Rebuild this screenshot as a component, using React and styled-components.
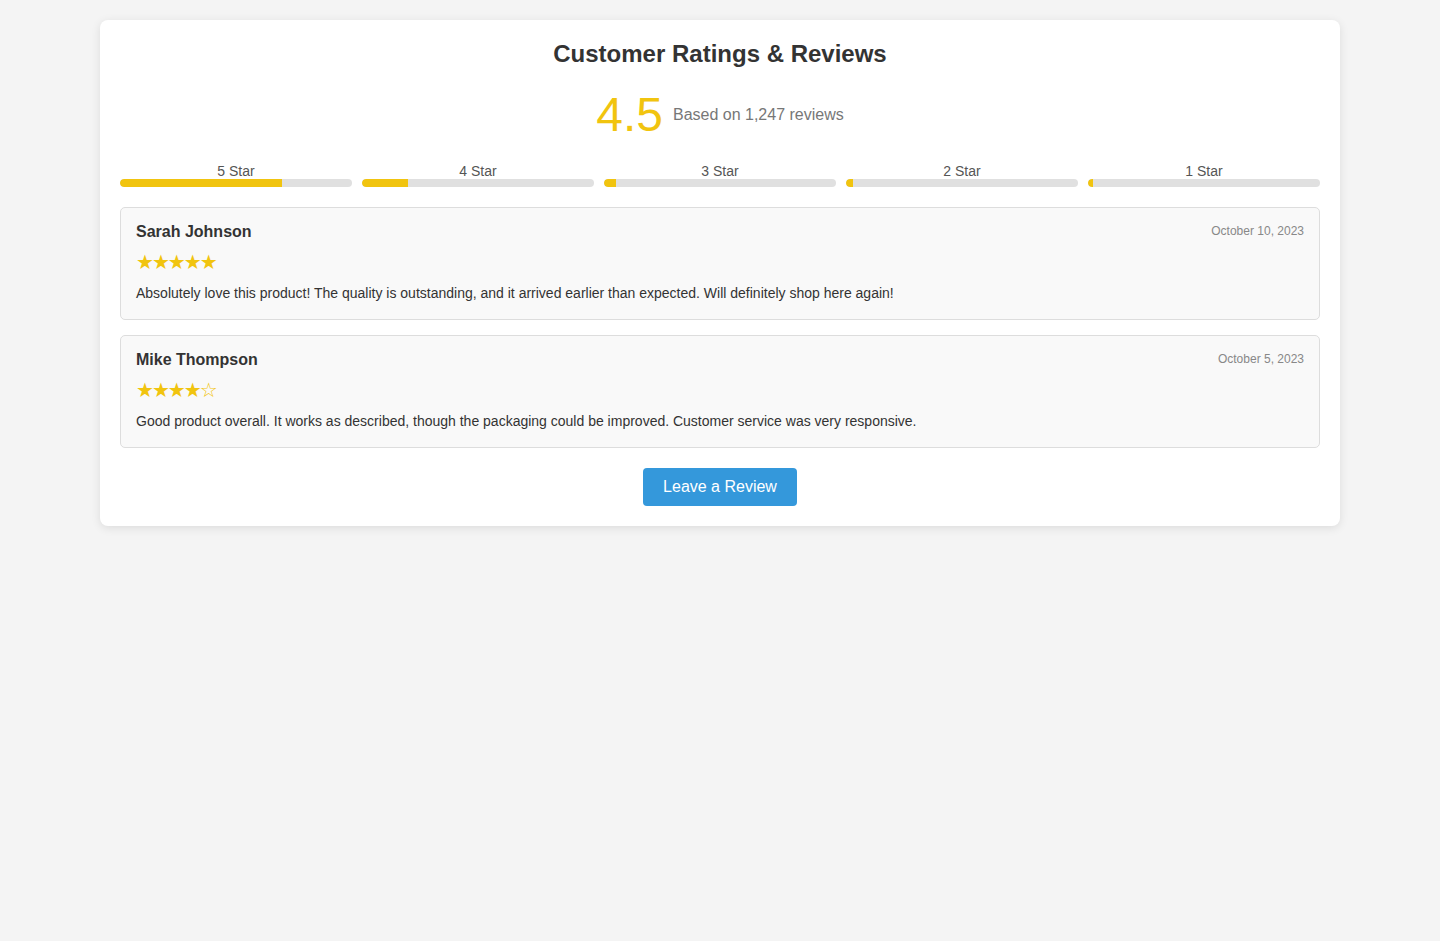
import React from 'react';
import styled, { createGlobalStyle } from 'styled-components';

const GlobalStyle = createGlobalStyle`
  body {
    margin: 0;
    padding: 20px;
    background-color: #f4f4f4;
    font-family: "Liberation Sans", Arial, sans-serif;
    color: #333;
  }
`

const Container = styled.div`
  max-width: 1200px;
  margin: 0 auto;
  background-color: #fff;
  padding: 20px;
  border-radius: 8px;
  box-shadow: 0 2px 10px rgba(0,0,0,0.1);
`

const Title = styled.h1`
  margin: 0 0 20px;
  text-align: center;
  font-size: 24px;
  line-height: 28px;
  color: #333;
`

const Summary = styled.div`
  display: flex;
  align-items: center;
  justify-content: center;
  gap: 10px;
  margin-bottom: 21px;
`

const Score = styled.span`
  font-size: 48px;
  line-height: 54px;
  color: #f1c40f;
`

const Based = styled.span`
  font-size: 16px;
  color: #777;
`

const Bars = styled.div`
  display: flex;
  gap: 10px;
  margin-bottom: 20px;
`

const BarItem = styled.div`
  flex: 1;
  text-align: center;
`

const BarLabel = styled.div`
  font-size: 14px;
  line-height: 16px;
  color: #555;
`

const Track = styled.div`
  height: 8px;
  background-color: #e0e0e0;
  border-radius: 4px;
  overflow: hidden;
`

const Fill = styled.div`
  height: 100%;
  background-color: #f1c40f;
  border-radius: 4px 0 0 4px;
`

const Card = styled.div`
  background-color: #f9f9f9;
  border: 1px solid #ddd;
  border-radius: 5px;
  padding: 15px;
  margin-bottom: 15px;
`

const CardHead = styled.div`
  display: flex;
  justify-content: space-between;
  align-items: flex-start;
  margin-bottom: 10px;
`

const Name = styled.span`
  font-weight: bold;
  font-size: 16px;
  line-height: 18px;
`

const DateText = styled.span`
  font-size: 12px;
  line-height: 16px;
  color: #888;
`

const Stars = styled.div`
  color: #f1c40f;
  font-size: 20px;
  line-height: 23px;
  letter-spacing: -2px;
  font-family: "DejaVu Sans", sans-serif;
  margin-bottom: 9px;
`

const Text = styled.p`
  margin: 0;
  font-size: 14px;
  line-height: 21px;
  color: #333;
`

const ButtonRow = styled.div`
  text-align: center;
  margin-top: 20px;
`

const Button = styled.button`
  background-color: #3498db;
  color: #fff;
  border: none;
  border-radius: 4px;
  padding: 10px 20px;
  font-size: 16px;
  line-height: 18px;
  font-family: "Liberation Sans", Arial, sans-serif;
  cursor: pointer;
`

const bars = [
  { label: '5 Star', pct: 70 },
  { label: '4 Star', pct: 20 },
  { label: '3 Star', pct: 5 },
  { label: '2 Star', pct: 3 },
  { label: '1 Star', pct: 2 },
]

const reviews = [
  {
    name: 'Sarah Johnson',
    date: 'October 10, 2023',
    stars: 5,
    text: 'Absolutely love this product! The quality is outstanding, and it arrived earlier than expected. Will definitely shop here again!',
  },
  {
    name: 'Mike Thompson',
    date: 'October 5, 2023',
    stars: 4,
    text: 'Good product overall. It works as described, though the packaging could be improved. Customer service was very responsive.',
  },
]

const App = () => {
  return (
    <>
      <GlobalStyle />
      <Container>
        <Title>Customer Ratings &amp; Reviews</Title>
        <Summary>
          <Score>4.5</Score>
          <Based>Based on 1,247 reviews</Based>
        </Summary>
        <Bars>
          {bars.map(b => (
            <BarItem key={b.label}>
              <BarLabel>{b.label}</BarLabel>
              <Track><Fill style={{ width: b.pct + '%' }} /></Track>
            </BarItem>
          ))}
        </Bars>
        {reviews.map(r => (
          <Card key={r.name}>
            <CardHead>
              <Name>{r.name}</Name>
              <DateText>{r.date}</DateText>
            </CardHead>
            <Stars>{'★'.repeat(r.stars) + '☆'.repeat(5 - r.stars)}</Stars>
            <Text>{r.text}</Text>
          </Card>
        ))}
        <ButtonRow>
          <Button>Leave a Review</Button>
        </ButtonRow>
      </Container>
    </>
  )
}

export default App;
